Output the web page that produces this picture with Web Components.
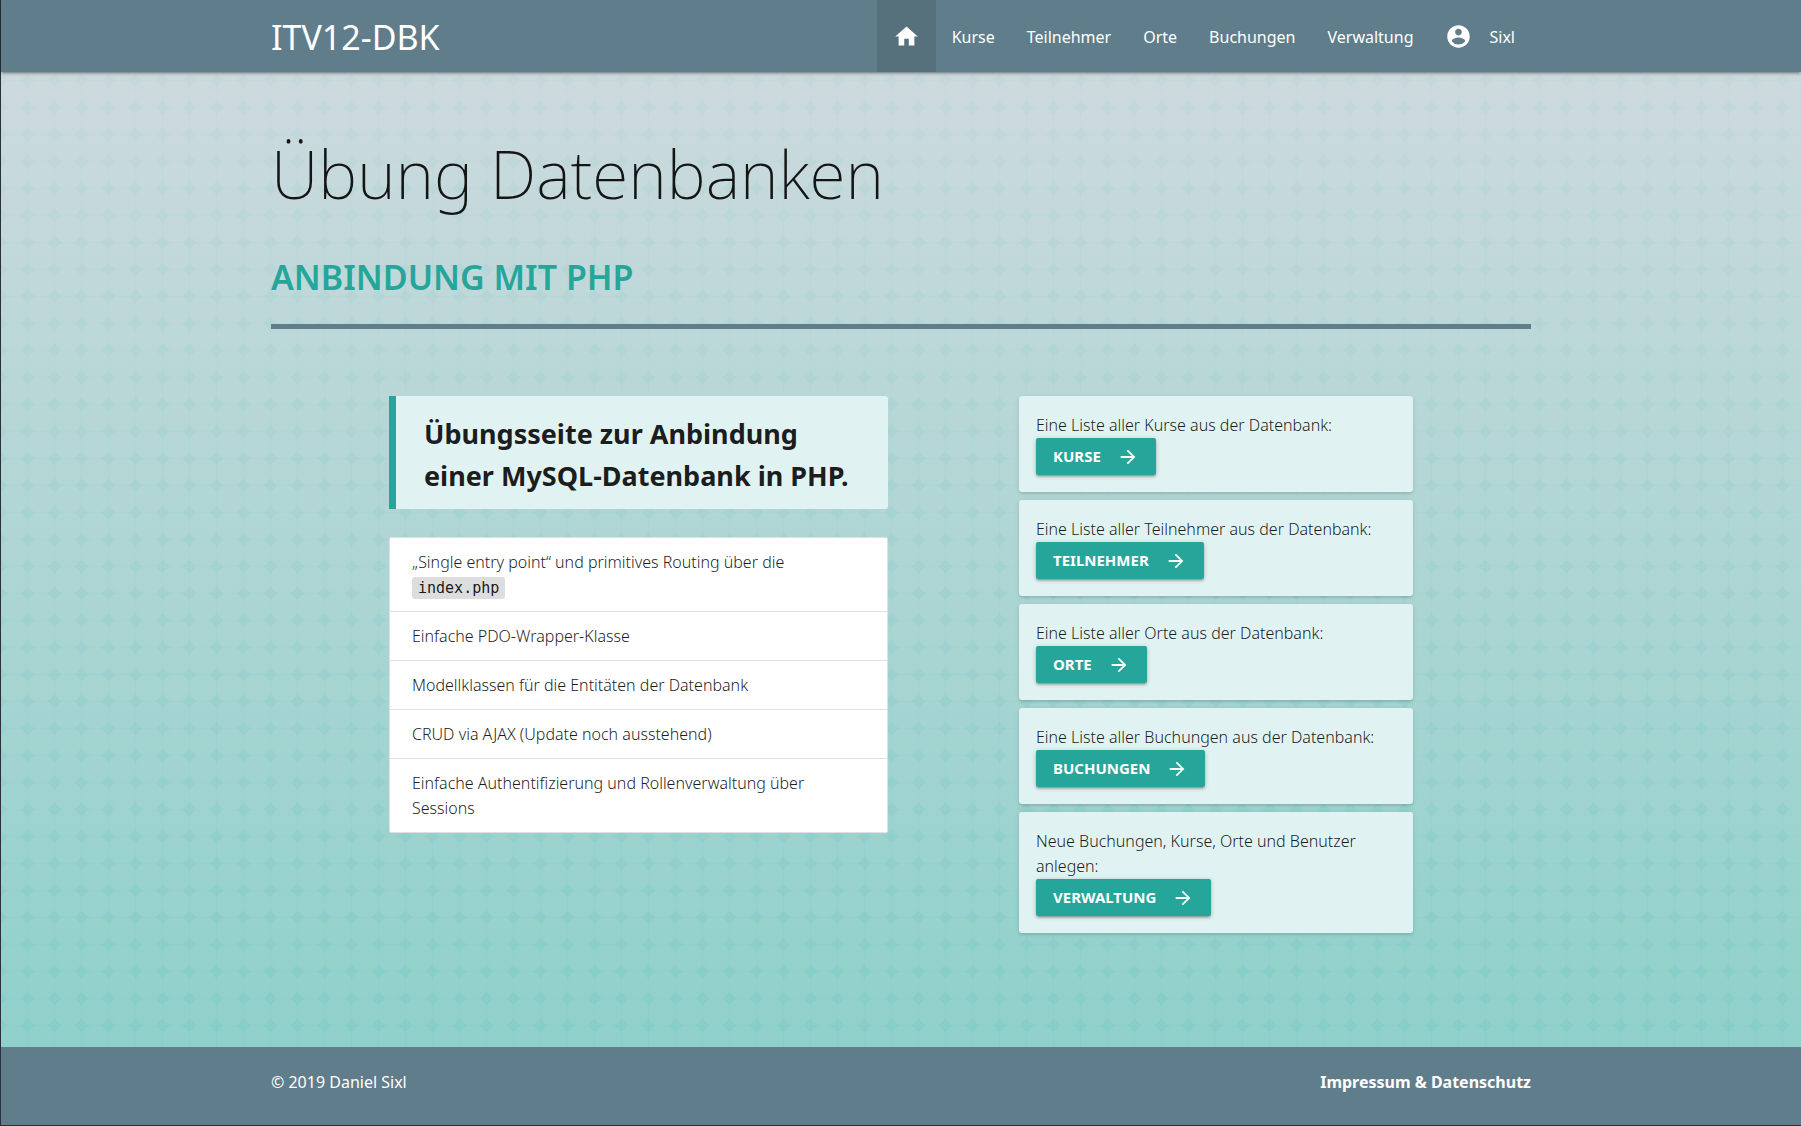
<!DOCTYPE html>
<html lang="de">
<head>
<meta charset="utf-8">
<meta name="viewport" content="width=device-width, initial-scale=1">
<title>ITV12-DBK</title>
<style>
  :root {
    --teal: #26a69a;
    --teal-pale: #e0f2f1;
    --slate: #607d8b;
    --ink: rgba(0, 0, 0, .9);
    --shadow: 0 2px 2px 0 rgba(0,0,0,.14), 0 3px 1px -2px rgba(0,0,0,.12), 0 1px 5px 0 rgba(0,0,0,.2);
    --shadow-soft: 0 2px 2px 0 rgba(0,0,0,.07), 0 1px 5px 0 rgba(0,0,0,.1);
  }
  html { background: #2c3038; }
  body {
    margin: 0;
    color: var(--ink);
    font: 300 16px/25px "Noto Sans", "Open Sans", sans-serif;
  }
</style>
</head>
<body>
<dbk-app>
  <dbk-navbar slot="header" brand="ITV12-DBK">
    <dbk-nav-item href="#home" icon="home" name="Startseite" active></dbk-nav-item>
    <dbk-nav-item href="#kurse">Kurse</dbk-nav-item>
    <dbk-nav-item href="#teilnehmer">Teilnehmer</dbk-nav-item>
    <dbk-nav-item href="#orte">Orte</dbk-nav-item>
    <dbk-nav-item href="#buchungen">Buchungen</dbk-nav-item>
    <dbk-nav-item href="#verwaltung">Verwaltung</dbk-nav-item>
    <dbk-nav-item href="#profil" icon="account">Sixl</dbk-nav-item>
  </dbk-navbar>

  <dbk-page-title>Übung Datenbanken<span slot="subtitle">Anbindung mit PHP</span></dbk-page-title>

  <dbk-columns>
    <dbk-callout slot="main">Übungsseite zur Anbindung einer MySQL-Datenbank in PHP.</dbk-callout>
    <dbk-collection slot="main">
      <dbk-collection-item>„Single entry point“ und primitives Routing über die <dbk-code>index.php</dbk-code></dbk-collection-item>
      <dbk-collection-item>Einfache PDO-Wrapper-Klasse</dbk-collection-item>
      <dbk-collection-item>Modellklassen für die Entitäten der Datenbank</dbk-collection-item>
      <dbk-collection-item>CRUD via AJAX (Update noch ausstehend)</dbk-collection-item>
      <dbk-collection-item>Einfache Authentifizierung und Rollenverwaltung über Sessions</dbk-collection-item>
    </dbk-collection>

    <dbk-card slot="aside" href="#kurse" action="Kurse">Eine Liste aller Kurse aus der Datenbank:</dbk-card>
    <dbk-card slot="aside" href="#teilnehmer" action="Teilnehmer">Eine Liste aller Teilnehmer aus der Datenbank:</dbk-card>
    <dbk-card slot="aside" href="#orte" action="Orte">Eine Liste aller Orte aus der Datenbank:</dbk-card>
    <dbk-card slot="aside" href="#buchungen" action="Buchungen">Eine Liste aller Buchungen aus der Datenbank:</dbk-card>
    <dbk-card slot="aside" href="#verwaltung" action="Verwaltung">Neue Buchungen, Kurse, Orte und Benutzer anlegen:</dbk-card>
  </dbk-columns>

  <dbk-footer slot="footer">© 2019 Daniel Sixl<span slot="link">Impressum &amp; Datenschutz</span></dbk-footer>
</dbk-app>

<script>
const ICONS = {
  home: 'M10 20v-6h4v6h5v-8h3L12 3 2 12h3v8z',
  account: 'M12 2C6.48 2 2 6.48 2 12s4.48 10 10 10 10-4.48 10-10S17.52 2 12 2zm0 3c1.66 0 3 1.34 3 3s-1.34 3-3 3-3-1.34-3-3 1.34-3 3-3zm0 14.2c-2.5 0-4.71-1.28-6-3.22.03-1.99 4-3.08 6-3.08 1.99 0 5.97 1.09 6 3.08-1.29 1.94-3.5 3.22-6 3.22z',
  arrow: 'M12 4l-1.41 1.41L16.17 11H4v2h12.17l-5.58 5.59L12 20l8-8z'
};
const icon = name => `<svg viewBox="0 0 24 24" aria-hidden="true"><path fill="currentColor" d="${ICONS[name]}"/></svg>`;

function define(tag, render) {
  customElements.define(tag, class extends HTMLElement {
    constructor() {
      super();
      this.attachShadow({ mode: 'open' });
    }
    connectedCallback() {
      this.shadowRoot.innerHTML = render(this);
    }
  });
}

define('dbk-app', () => `
  <style>
    :host { display: flex; flex-direction: column; min-height: 100vh; box-sizing: border-box;
            border-left: 1px solid #2c3038; border-bottom: 1px solid #2c3038; }
    main { flex: 1; display: grid; background: linear-gradient(#cddade, #8fd1ca); }
    main > * { grid-area: 1 / 1; }
    .pattern { width: 100%; height: 0; min-height: 100%; mask-image: linear-gradient(rgba(0,0,0,.35), #000); }
    .container { z-index: 1; width: 70%; margin: 0 auto; padding: 65px 0 96px; }
  </style>
  <slot name="header"></slot>
  <main>
    <svg class="pattern" aria-hidden="true">
      <defs>
        <pattern id="stars" x="13" y="22" width="27" height="27" patternUnits="userSpaceOnUse">
          <path d="M0 13.500H27M13.500 0V27" stroke="#4fb9bb" stroke-opacity=".04"/>
          <path d="M13.500 4Q15.500 11.500 23 13.500Q15.500 15.500 13.500 23Q11.500 15.500 4 13.500Q11.500 11.500 13.500 4Z" fill="#4fb9bb" fill-opacity=".07"/>
          <path d="M13.500 7L20 13.500L13.500 20L7 13.500Z" fill="#4fb9bb" fill-opacity=".09"/>
        </pattern>
      </defs>
      <rect width="100%" height="100%" fill="url(#stars)"/>
    </svg>
    <div class="container"><slot></slot></div>
  </main>
  <slot name="footer"></slot>`);

define('dbk-navbar', el => `
  <style>
    :host { display: block; position: relative; z-index: 2; background: var(--slate); color: #fff; box-shadow: var(--shadow); }
    nav { display: flex; justify-content: space-between; width: 70%; margin: 0 auto; line-height: 74px; height: 72px; font-weight: 400; }
    .brand { color: inherit; text-decoration: none; font-size: 34px; white-space: nowrap; }
    .items { display: flex; }
  </style>
  <nav>
    <a class="brand" href="#home">${el.getAttribute('brand')}</a>
    <div class="items"><slot></slot></div>
  </nav>`);

define('dbk-nav-item', el => `
  <style>
    :host { display: block; }
    :host([active]) { background: rgba(0,0,0,.1); }
    a { display: flex; align-items: flex-start; gap: 17px; height: 72px; padding: 0 16px; color: inherit; text-decoration: none; }
    svg { align-self: center; width: 27px; height: 27px; }
  </style>
  <a href="${el.getAttribute('href')}"${el.hasAttribute('name') ? ` aria-label="${el.getAttribute('name')}"` : ''}>${el.hasAttribute('icon') ? icon(el.getAttribute('icon')) : ''}<slot></slot></a>`);

define('dbk-page-title', () => `
  <style>
    :host { display: block; }
    h1 { margin: 0 0 48px; font-size: 66px; line-height: 72px; font-weight: 200; }
    h2 { margin: 0 0 27px; font-size: 34px; line-height: 40px; font-weight: 600; text-transform: uppercase; color: var(--teal); }
    hr { margin: 0 0 67px; border: 0; height: 5px; background: var(--slate); }
  </style>
  <h1><slot></slot></h1>
  <h2><slot name="subtitle"></slot></h2>
  <hr>`);

define('dbk-columns', () => `
  <style>
    :host { display: grid; grid-template-columns: repeat(12, minmax(0, 1fr)); align-items: start; }
    .main, .aside { display: flex; flex-direction: column; padding: 0 13px; }
    .main { grid-column: 2 / span 5; gap: 28px; }
    .aside { grid-column: 8 / span 4; gap: 8px; }
  </style>
  <div class="main"><slot name="main"></slot></div>
  <div class="aside"><slot name="aside"></slot></div>`);

define('dbk-callout', () => `
  <style>
    :host { display: block; }
    blockquote { margin: 0; padding: 17px 28px 12px; border-left: 7px solid var(--teal); border-radius: 0 3px 3px 0;
                 background: var(--teal-pale); font-size: 27px; line-height: 42px; font-weight: 700; }
  </style>
  <blockquote><slot></slot></blockquote>`);

define('dbk-collection', () => `
  <style>
    :host { display: block; border: 1px solid #e0e0e0; border-radius: 2px; background: #fff; overflow: hidden; }
    ::slotted(:not(:last-child)) { border-bottom: 1px solid #e0e0e0; }
  </style>
  <div role="list"><slot></slot></div>`);

define('dbk-collection-item', () => `
  <style>
    :host { display: block; padding: 12px 22px 11px; }
  </style>
  <div role="listitem"><slot></slot></div>`);

define('dbk-code', () => `
  <style>
    code { padding: 2px 6px; border-radius: 3px; background: #ddd; font: 400 15px "DejaVu Sans Mono", monospace; }
  </style>
  <code><slot></slot></code>`);

define('dbk-card', el => `
  <style>
    :host { display: block; padding: 17px; border-radius: 3px; background: var(--teal-pale); box-shadow: var(--shadow-soft); }
    p { margin: 0; }
    a { display: inline-flex; align-items: center; gap: 16px; height: 37px; padding: 0 17px; border-radius: 2px;
        background: var(--teal); color: #fff; box-shadow: var(--shadow); vertical-align: top;
        font-size: 15px; font-weight: 700; text-transform: uppercase; text-decoration: none; }
    svg { width: 22px; height: 22px; }
  </style>
  <p><slot></slot></p>
  <a href="${el.getAttribute('href')}">${el.getAttribute('action')}${icon('arrow')}</a>`);

define('dbk-footer', () => `
  <style>
    :host { display: block; background: var(--slate); color: #fff; }
    footer { display: flex; justify-content: space-between; width: 70%; margin: 0 auto; padding: 23px 0 30px; font-weight: 400; }
    a { color: inherit; font-weight: 700; text-decoration: none; }
  </style>
  <footer><span><slot></slot></span><a href="#impressum"><slot name="link"></slot></a></footer>`);
</script>
</body>
</html>
